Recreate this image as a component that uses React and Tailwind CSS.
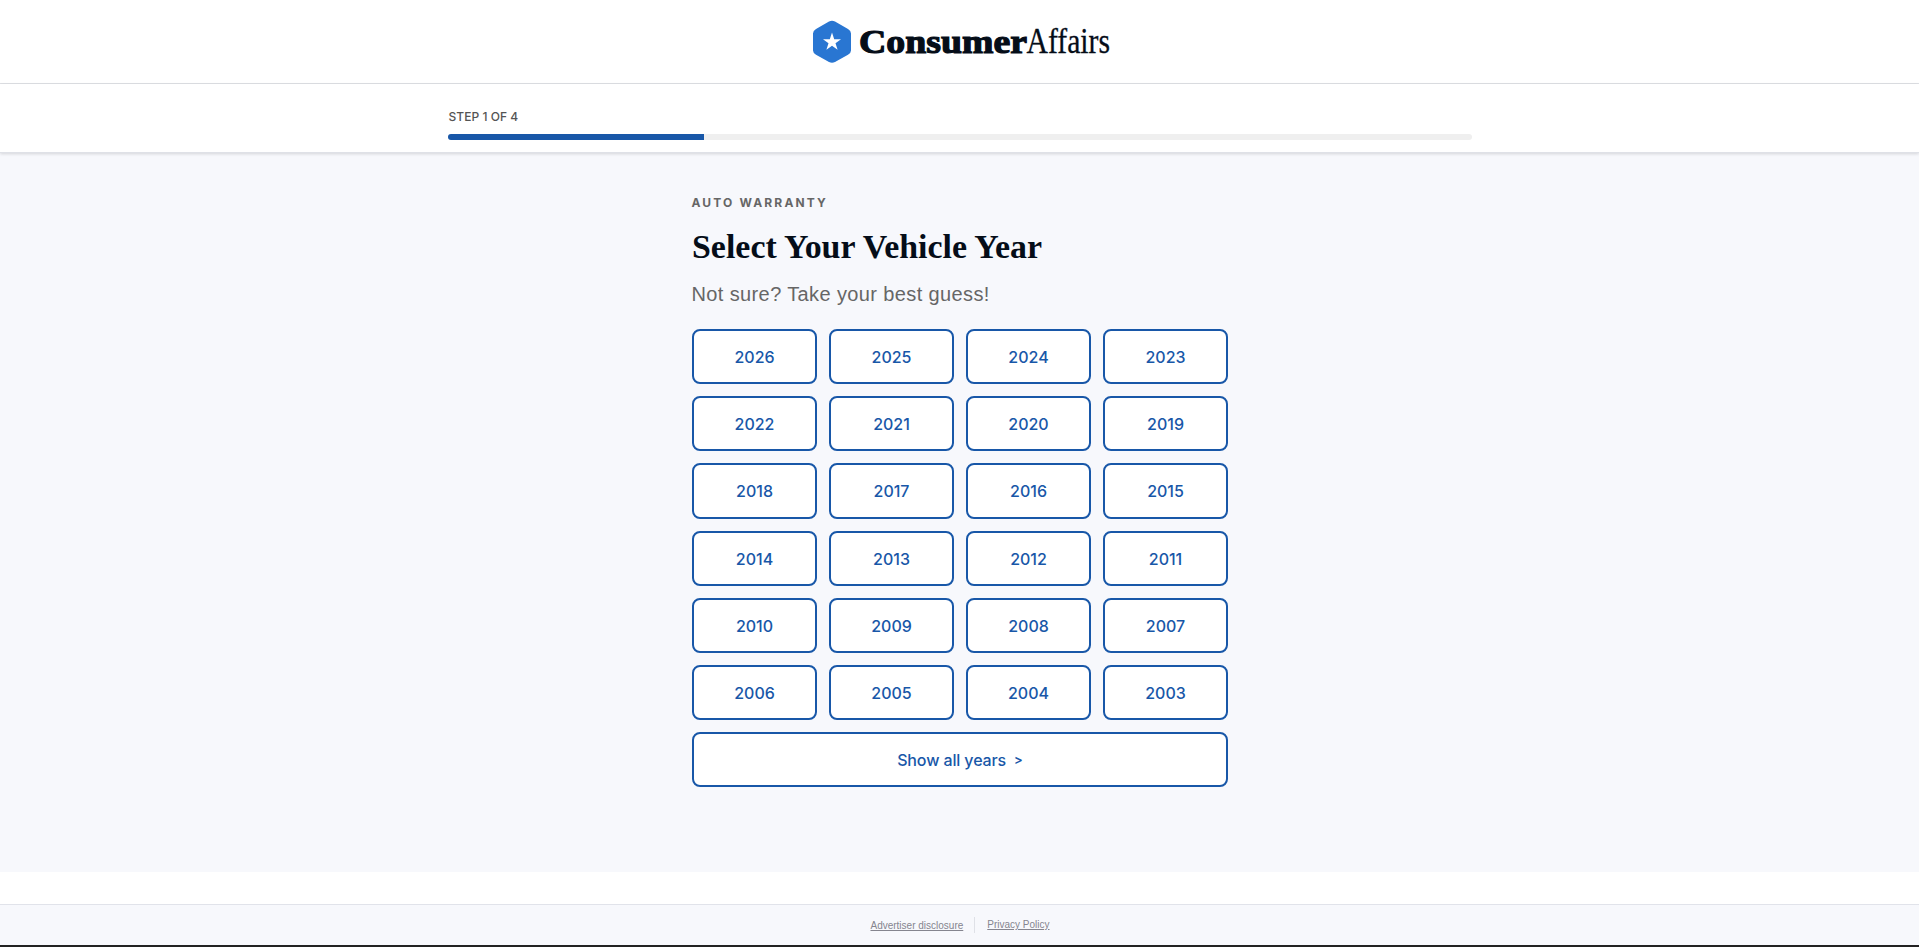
const years = Array.from({ length: 24 }, (_, i) => 2026 - i);

const choice =
  "flex items-center justify-center rounded-lg border-2 border-[#1857a8] bg-white pt-px pl-px font-['Inter',sans-serif] text-base font-medium text-[#1857a8]";

function Logo() {
  return (
    <svg width="300" height="44" viewBox="0 0 300 44" className="block overflow-visible" role="img" aria-label="ConsumerAffairs">
      <path
        d="M17 1.6 Q20 0 23 1.6 L36 9 Q39 10.700 39 13.500 V30.500 Q39 33 36 34.700 L23 42 Q20 43.600 17 42 L4 34.700 Q1 33 1 30.500 V13.500 Q1 10.700 4 9 Z"
        fill="#2976d2"
      />
      <path
        d="M20 12.500 L22.200 19.300 L29 19.300 L23.500 23.300 L25.600 29.800 L20 25.800 L14.400 29.800 L16.500 23.300 L11 19.300 L17.800 19.300 Z"
        fill="#fff"
      />
      <text x="47" y="33" textLength="168" lengthAdjust="spacingAndGlyphs" fill="#050d18" stroke="#050d18" strokeWidth="1.200" className="font-['Liberation_Serif',serif] text-[34.500px] font-bold">
        Consumer
      </text>
      <text x="214.500" y="33.300" textLength="83.500" lengthAdjust="spacingAndGlyphs" fill="#050d18" stroke="#050d18" strokeWidth="0.300" className="font-['Liberation_Serif',serif] text-[35px]">
        Affairs
      </text>
    </svg>
  );
}

export default function App() {
  return (
    <div className="flex h-[947px] flex-col overflow-hidden bg-white">
      <header className="flex h-[84px] shrink-0 justify-center border-b border-[#dfe1e5] pt-5 pl-[5px]">
        <Logo />
      </header>
      <section className="relative h-[69px] shrink-0 border-b border-[#dfe1e7] bg-white shadow-[0_1px_3px_rgba(0,0,0,0.14)]">
        <div className="mx-auto w-[1024px] pt-6">
          <p className="h-[26px] pl-px font-['Inter',sans-serif] text-xs leading-[18px] font-medium tracking-[0.05px] text-[#545454]">
            STEP 1 OF 4
          </p>
          <div className="h-1.5 overflow-hidden rounded-full bg-[#efefef]">
            <div className="h-full w-1/4 bg-[#1857a8]" />
          </div>
        </div>
      </section>
      <main className="h-[719px] shrink-0 bg-[#f7f8fc]">
        <div className="mx-auto w-[536px] pt-10">
          <p className="h-[29px] font-['Inter',sans-serif] text-xs leading-5 font-bold tracking-[2.150px] text-[#666]">
            AUTO WARRANTY
          </p>
          <h1 className="h-[52px]">
            <svg width="354" height="52" className="block overflow-visible">
              <text x="0" y="36" textLength="350" lengthAdjust="spacingAndGlyphs" fill="#050d18" className="font-['Liberation_Serif',serif] text-[34px] font-bold">
                Select Your Vehicle Year
              </text>
            </svg>
          </h1>
          <p className="h-[55px] font-['Liberation_Sans',sans-serif] text-xl leading-[41px] tracking-[0.380px] text-[#666]">
            Not sure? Take your best guess!
          </p>
          <div className="grid auto-rows-[55.190px] grid-cols-4 gap-3">
            {years.map((year) => (
              <button key={year} className={choice}>{year}</button>
            ))}
            <button className={`${choice} col-span-4 gap-2`}>
              <span className="tracking-[-0.120px]">Show all years</span>
              <span className="text-[13px] font-semibold">&gt;</span>
            </button>
          </div>
        </div>
      </main>
      <div className="h-8 shrink-0" />
      <footer className="flex h-[41px] shrink-0 justify-center border-t border-[#e1e3ea] bg-[#f7f8fc] pt-3 pl-px font-['Liberation_Sans',sans-serif] text-[10px] leading-4 text-[#85858f]">
        <a className="mt-px h-4 underline">Advertiser disclosure</a>
        <span className="mr-3 ml-[11px] h-4 w-px bg-[#dfe1e7]" />
        <a className="h-4 underline">Privacy Policy</a>
      </footer>
      <div className="h-0.5 shrink-0 bg-[#222]" />
    </div>
  );
}
